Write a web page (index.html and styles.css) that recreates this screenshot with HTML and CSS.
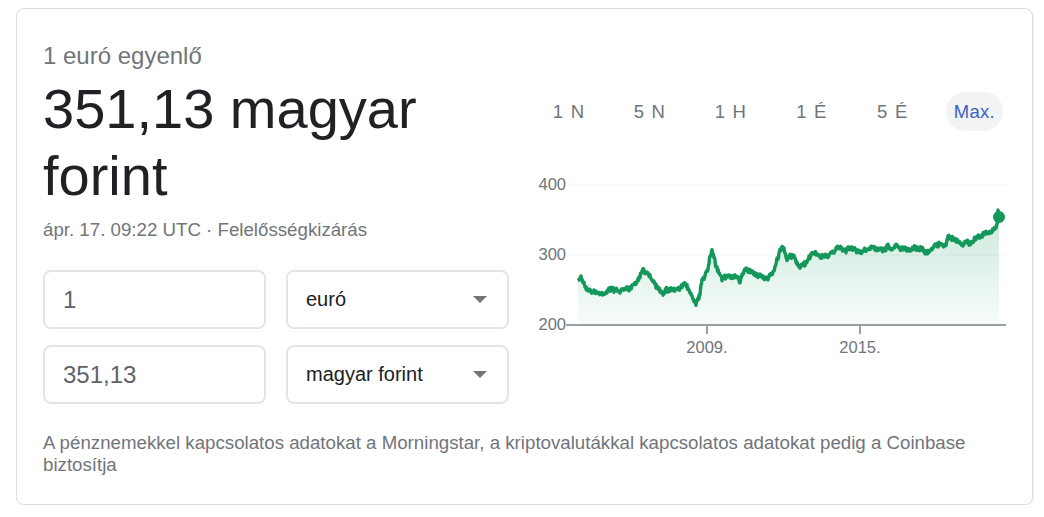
FILE: index.html
```html
<!DOCTYPE html>
<html lang="hu">
<head>
  <meta charset="UTF-8">
  <title>Valutaváltó</title>
  <link rel="stylesheet" href="styles.css">
</head>
<body>
  <div class="card">
    <div class="top">

      <!-- Left: rate summary + converter -->
      <div class="summary">
        <div class="label">1 euró egyenlő</div>
        <div class="value">351,13 magyar forint</div>
        <div class="meta">ápr. 17. 09:22 UTC · <span class="disclaimer">Felelősségkizárás</span></div>

        <div class="converter">
          <div class="field">1</div>
          <div class="field select">euró <span class="caret"></span></div>
          <div class="field">351,13</div>
          <div class="field select">magyar forint <span class="caret"></span></div>
        </div>
      </div>

      <!-- Right: range buttons + chart -->
      <div class="chart-panel">
        <div class="ranges">
          <button>1 N</button>
          <button>5 N</button>
          <button>1 H</button>
          <button>1 É</button>
          <button>5 É</button>
          <button class="active">Max.</button>
        </div>
        <svg class="chart" id="chart" width="476" height="195" viewBox="0 0 476 195">
          <defs>
            <linearGradient id="fillGrad" x1="0" y1="0" x2="0" y2="1">
              <stop offset="0" stop-color="#0f9d58" stop-opacity="0.22"/>
              <stop offset="1" stop-color="#0f9d58" stop-opacity="0.03"/>
            </linearGradient>
          </defs>
          <line class="grid" x1="38" y1="19" x2="476" y2="19"/>
          <line class="grid" x1="38" y1="89" x2="476" y2="89"/>
          <text class="ylabel" x="36" y="24">400</text>
          <text class="ylabel" x="36" y="94">300</text>
          <text class="ylabel" x="36" y="164">200</text>
          <path id="area" fill="url(#fillGrad)"/>
          <path id="line" class="line"/>
          <line class="axis" x1="36" y1="159" x2="476" y2="159"/>
          <line class="axis" x1="177" y1="159" x2="177" y2="168"/>
          <line class="axis" x1="330" y1="159" x2="330" y2="168"/>
          <text class="xlabel" x="177" y="187">2009.</text>
          <text class="xlabel" x="330" y="187">2015.</text>
          <circle class="dot" cx="469" cy="51" r="6"/>
        </svg>
      </div>
    </div>

    <div class="source">A pénznemekkel kapcsolatos adatokat a Morningstar, a kriptovalutákkal kapcsolatos adatokat pedig a Coinbase biztosítja</div>
  </div>
  <script src="chart.js"></script>
</body>
</html>
```

FILE: styles.css
```css
body {
  margin: 0;
  padding: 8px 0 0 16px;
  background-color: #fff;
  font-family: "Liberation Sans", Arial, sans-serif;
}
.card {
  width: 1017px;
  height: 497px;
  box-sizing: border-box;
  border: 1px solid #dadce0;
  border-radius: 8px;
  box-shadow: 1px 1px 2px rgba(0,0,0,0.06);
  padding: 33px 26px 0 26px;
}
.top {
  display: flex;
  gap: 21px;
}

/* Left column */
.summary {
  width: 466px;
}
.label {
  font-size: 24px;
  line-height: 28px;
  color: #70757a;
}
.value {
  margin-top: 5px;
  font-size: 56px;
  line-height: 67px;
  color: #202124;
}
.meta {
  margin-top: 9px;
  font-size: 18.7px;
  line-height: 24px;
  color: #70757a;
}
.converter {
  display: grid;
  grid-template-columns: 223px 223px;
  column-gap: 20px;
  row-gap: 16px;
  margin-top: 28px;
}
.field {
  height: 59px;
  box-sizing: border-box;
  border: 2px solid #e3e4e7;
  border-radius: 8px;
  padding: 0 18px;
  display: flex;
  align-items: center;
  font-size: 24px;
  color: #5f6368;
}
.field.select {
  justify-content: space-between;
  font-size: 20px;
  color: #202124;
}
.caret {
  width: 0;
  height: 0;
  border-left: 7px solid transparent;
  border-right: 7px solid transparent;
  border-top: 7px solid #757575;
  margin-right: 2px;
}

/* Right column */
.chart-panel {
  width: 476px;
}
.ranges {
  display: flex;
  justify-content: space-between;
  margin-top: 50px;
  padding: 0 3px 0 11px;
}
.ranges button {
  height: 39px;
  min-width: 56px;
  padding: 0 8px;
  border: none;
  border-radius: 20px;
  background: none;
  font-family: "Liberation Sans", Arial, sans-serif;
  font-size: 18.5px;
  letter-spacing: 1.2px;
  color: #70757a;
}
.ranges button.active {
  background-color: #f1f3f4;
  color: #3b62c4;
  letter-spacing: 0.3px;
}
.chart {
  display: block;
  margin-top: 35px;
}
.grid {
  stroke: #f1f3f4;
  stroke-width: 1;
}
.axis {
  stroke: #9aa0a6;
  stroke-width: 2;
}
.ylabel {
  font-size: 16.5px;
  fill: #70757a;
  text-anchor: end;
}
.xlabel {
  font-size: 16.5px;
  fill: #70757a;
  text-anchor: middle;
}
.line {
  fill: none;
  stroke: #13975a;
  stroke-width: 3.4;
  stroke-linejoin: round;
}
.dot {
  fill: #13975a;
}

/* Footer */
.source {
  margin-top: 28px;
  font-size: 18.7px;
  line-height: 22px;
  color: #70757a;
}
```

FILE: chart.js
```js
// EUR/HUF history, key points in page px, noise added on top
var keys = [
  [578, 280], [581, 277], [587, 290], [595, 291], [603, 293], [612, 290],
  [620, 290], [630, 287], [637, 280], [643, 270], [648, 274], [653, 280],
  [663, 290], [670, 289], [677, 287], [685, 282], [690, 290], [696, 302],
  [700, 292], [702, 277], [707, 268], [712, 248], [716, 262], [722, 277],
  [733, 275], [740, 280], [745, 265], [753, 272], [760, 276], [767, 278],
  [775, 270], [780, 250], [783, 245], [787, 260], [793, 255], [800, 268],
  [806, 262], [813, 253], [820, 256], [827, 257], [834, 250], [840, 247],
  [847, 250], [853, 247], [860, 251], [867, 250], [873, 245], [880, 249],
  [887, 248], [895, 246], [903, 247], [912, 249], [920, 248], [927, 252],
  [937, 245], [945, 243], [948, 236], [955, 239], [962, 242], [970, 243],
  [977, 236], [983, 232], [990, 231], [995, 226], [998, 217]
];
var ox = 530, oy = 165, base = 159;

function rng(seed) {
  return function () {
    seed = (seed + 0x6D2B79F5) | 0;
    var t = Math.imul(seed ^ (seed >>> 15), 1 | seed);
    t = (t + Math.imul(t ^ (t >>> 7), 61 | t)) ^ t;
    return ((t ^ (t >>> 14)) >>> 0) / 4294967296;
  };
}
var r = rng(17);

var pts = [];
var walk = 0;
for (var i = 0; i < keys.length - 1; i++) {
  var a = keys[i], b = keys[i + 1];
  for (var x = a[0]; x < b[0]; x += 0.5) {
    var t = (x - a[0]) / (b[0] - a[0]);
    var y = a[1] + (b[1] - a[1]) * t;
    walk = walk * 0.8 + (r() - 0.5) * 2.6;
    y += walk + (r() - 0.5) * 3.4;
    pts.push([x - ox, y - oy]);
  }
}
pts.push([998 - ox, 209 - oy]);
pts.push([999 - ox, 216 - oy]);

var d = pts.map(function (p, k) {
  return (k ? 'L' : 'M') + p[0].toFixed(1) + ' ' + p[1].toFixed(1);
}).join(' ');

document.getElementById('line').setAttribute('d', d);
document.getElementById('area').setAttribute('d',
  d + ' L' + pts[pts.length - 1][0].toFixed(1) + ' ' + base +
  ' L' + pts[0][0].toFixed(1) + ' ' + base + ' Z');
```
